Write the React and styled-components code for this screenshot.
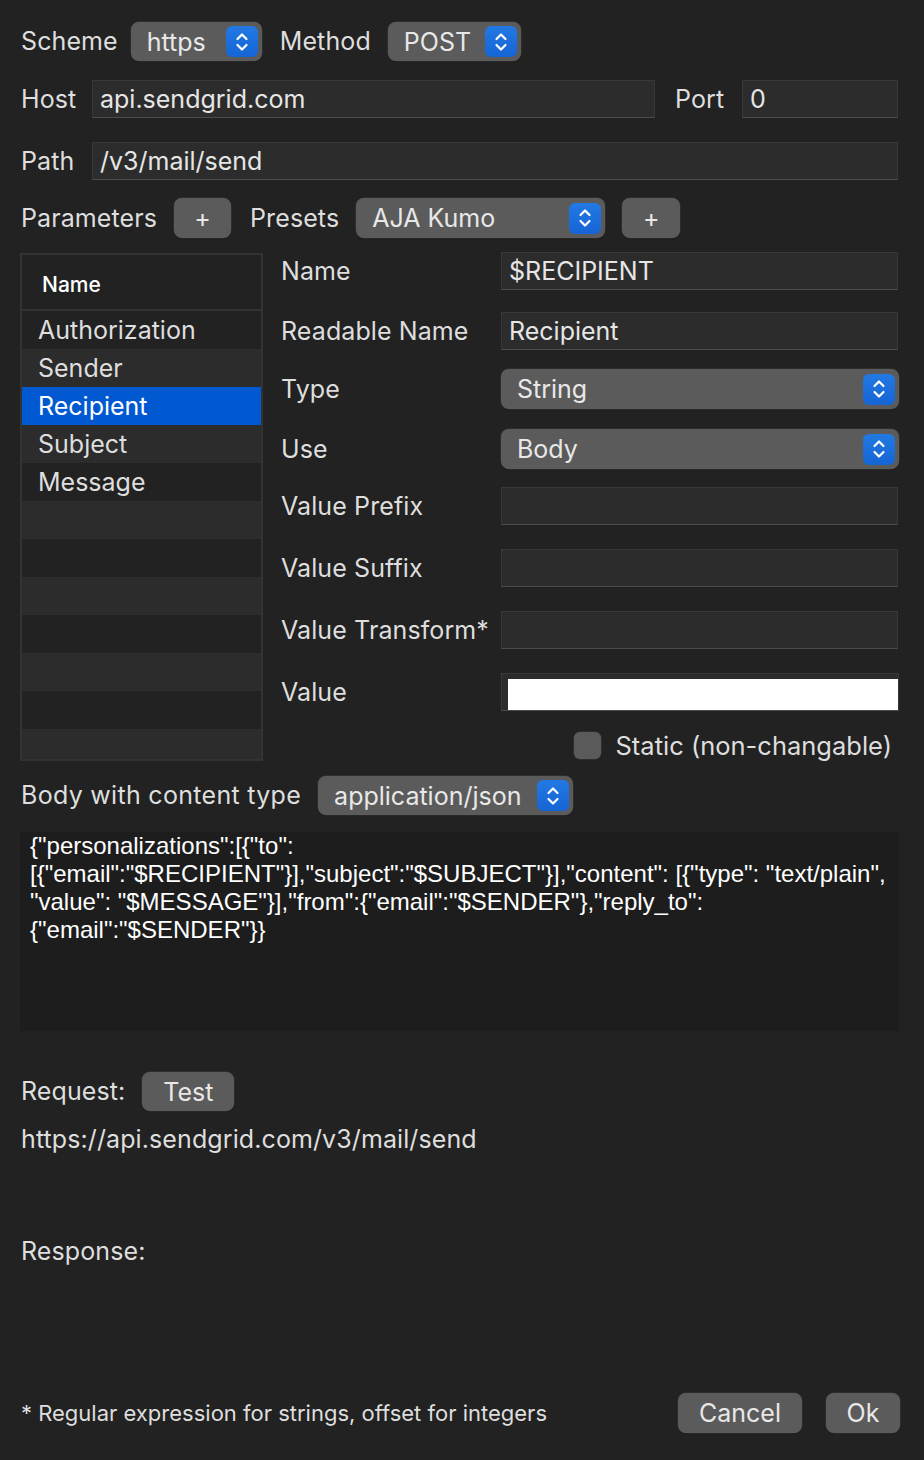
import React from "react";
import styled, { createGlobalStyle } from "styled-components";

const GlobalStyle = createGlobalStyle`
	body {
		margin: 0;
		background: #222222;
		font-family: Inter, "Noto Sans", sans-serif;
		color: #dedede;
	}
`;

const Window = styled.div`
	width: 924px;
	height: 1460px;
	box-sizing: border-box;
	padding: 22px 26px 0 20px;
	display: flex;
	flex-direction: column;
	background: #222222;
	overflow: hidden;
`;

const Row = styled.div`
	display: flex;
	align-items: center;
	flex-shrink: 0;
	height: ${(p) => p.h ?? 38}px;
	margin-top: ${(p) => p.mt ?? 0}px;
	gap: ${(p) => p.gap ?? 16}px;
`;

const Label = styled.span`
	font-size: 25px;
	line-height: 1;
	white-space: nowrap;
	padding-left: 1px;
	letter-spacing: 0.1px;
	width: ${(p) => (p.w ? `${p.w}px` : "auto")};
	flex-shrink: 0;
`;

const Field = styled.div`
	box-sizing: border-box;
	height: 38px;
	width: ${(p) => (p.w ? `${p.w}px` : "auto")};
	flex: ${(p) => (p.w ? "none" : "1")};
	background: #2c2c2c;
	border: 1px solid #383838;
	border-bottom-color: #4c4c4c;
	font-size: 25px;
	color: #e6e6e6;
	display: flex;
	align-items: center;
	padding-left: 7px;
	white-space: nowrap;
`;

const ValueField = styled(Field)`
	padding: 5px 0 0 6px;
	margin-right: -1px;
	align-items: stretch;
`;

const WhiteFill = styled.div`
	flex: 1;
	background: #ffffff;
`;

const PopupBox = styled.div`
	box-sizing: border-box;
	height: ${(p) => p.h ?? 39}px;
	width: ${(p) => (p.w ? `${p.w}px` : "auto")};
	flex: ${(p) => (p.w ? "none" : "1")};
	background: #5b5b5b;
	border-radius: 8px;
	box-shadow: 0 0 0 0.5px #3a3a3a, 0 1px 1px rgba(0, 0, 0, 0.35);
	display: flex;
	align-items: center;
	justify-content: space-between;
	padding: 0 4px 0 ${(p) => p.pl ?? 16}px;
	font-size: 25px;
	color: #e8e8e8;
	white-space: nowrap;
`;

const Stepper = styled.div`
	width: 32px;
	height: 31px;
	border-radius: 6px;
	background: linear-gradient(#2379e3, #1565d4);
	display: flex;
	align-items: center;
	justify-content: center;
	flex-shrink: 0;
`;

const Chevrons = () => (
	<svg width="14" height="24" viewBox="0 0 14 24" fill="none">
		<path d="M2.5 9 L7 4.5 L11.5 9" stroke="#fff" strokeWidth="2.2" strokeLinecap="round" strokeLinejoin="round" />
		<path d="M2.5 15 L7 19.5 L11.5 15" stroke="#fff" strokeWidth="2.2" strokeLinecap="round" strokeLinejoin="round" />
	</svg>
);

const Popup = ({ children, ...rest }) => (
	<PopupBox {...rest}>
		<span>{children}</span>
		<Stepper>
			<Chevrons />
		</Stepper>
	</PopupBox>
);

const Button = styled.div`
	box-sizing: border-box;
	height: ${(p) => p.h ?? 40}px;
	width: ${(p) => p.w}px;
	flex-shrink: 0;
	background: #5b5b5b;
	border-radius: 8px;
	box-shadow: 0 0 0 0.5px #3a3a3a, 0 1px 1px rgba(0, 0, 0, 0.35);
	display: flex;
	align-items: center;
	justify-content: center;
	font-size: 25px;
	color: #e8e8e8;
`;

const Main = styled.div`
	display: flex;
	flex-shrink: 0;
	margin-top: 15px;
	height: 508px;
`;

const Table = styled.div`
	box-sizing: border-box;
	width: 243px;
	flex-shrink: 0;
	border: 2px solid #333333;
	display: flex;
	flex-direction: column;
	background: #222222;
	overflow: hidden;
`;

const TableHeader = styled.div`
	box-sizing: border-box;
	height: 56px;
	flex-shrink: 0;
	border-bottom: 2px solid #333333;
	display: flex;
	align-items: center;
	padding-left: 20px;
	padding-top: 4px;
	font-size: 21px;
	font-weight: 500;
	color: #ffffff;
`;

const TableRow = styled.div`
	height: 38px;
	flex-shrink: 0;
	display: flex;
	align-items: center;
	padding-left: 16px;
	font-size: 25px;
	color: ${(p) => (p.selected ? "#ffffff" : "#dedede")};
	background: ${(p) => (p.selected ? "#0059d0" : p.alt ? "#2c2c2c" : "#222222")};
`;

const Form = styled.div`
	flex: 1;
	display: flex;
	flex-direction: column;
	padding-left: 17px;
	margin-top: -1px;
`;

const FormRow = styled.div`
	display: flex;
	align-items: center;
	height: ${(p) => p.h ?? 38}px;
	margin-top: ${(p) => p.mt ?? 0}px;
`;

const FormLabel = styled(Label)`
	width: 220px;
`;

const StaticRow = styled.div`
	display: flex;
	align-items: center;
	justify-content: flex-end;
	gap: 14px;
	margin-top: 20px;
	height: 28px;
	padding-right: 6px;
	font-size: 25.5px;
`;

const Checkbox = styled.div`
	width: 27px;
	height: 27px;
	border-radius: 6px;
	background: #5a5a5a;
	box-shadow: 0 0 0 0.5px #3a3a3a;
`;

const BodyText = styled.div`
	box-sizing: border-box;
	flex-shrink: 0;
	margin: 17px -1px 0 0;
	height: 199px;
	background: #1d1d1d;
	padding: 0 10px;
	font-family: "Liberation Sans", Arial, sans-serif;
	font-size: 24px;
	line-height: 28px;
	color: #ffffff;
`;

const BodyLine = styled.div`
	white-space: nowrap;
`;

const Url = styled.div`
	margin-top: 12px;
	height: 32px;
	flex-shrink: 0;
	display: flex;
	align-items: center;
	font-size: 25px;
	padding-left: 1px;
	letter-spacing: 0.1px;
`;

const Footer = styled.div`
	display: flex;
	align-items: center;
	margin: auto -2px 27px 0;
	height: 40px;
	gap: 24px;
`;

const Note = styled.span`
	flex: 1;
	font-size: 22px;
	padding-left: 1px;
`;

const params = ["Authorization", "Sender", "Recipient", "Subject", "Message", "", "", "", "", "", "", ""];

const bodyLines = [
	'{"personalizations":[{"to":',
	'[{"email":"$RECIPIENT"}],"subject":"$SUBJECT"}],"content": [{"type": "text/plain",',
	'"value": "$MESSAGE"}],"from":{"email":"$SENDER"},"reply_to":',
	'{"email":"$SENDER"}}',
];

const App = () => {
	return (
		<>
			<GlobalStyle />
			<Window>
				<Row h={39} gap={0}>
					<Label>Scheme</Label>
					<Popup w={131} style={{ marginLeft: 13 }}>https</Popup>
					<Label style={{ marginLeft: 17 }}>Method</Label>
					<Popup w={133} style={{ marginLeft: 17 }}>POST</Popup>
				</Row>
				<Row mt={19} gap={0}>
					<Label w={71}>Host</Label>
					<Field w={563}>api.sendgrid.com</Field>
					<Label style={{ marginLeft: 19 }} w={67}>Port</Label>
					<Field w={156}>0</Field>
				</Row>
				<Row mt={24} gap={0}>
					<Label w={71}>Path</Label>
					<Field>/v3/mail/send</Field>
				</Row>
				<Row mt={18} h={40} gap={0}>
					<Label>Parameters</Label>
					<Button w={57} style={{ marginLeft: 17 }}>+</Button>
					<Label style={{ marginLeft: 18 }}>Presets</Label>
					<Popup w={249} h={40} style={{ marginLeft: 17 }}>AJA Kumo</Popup>
					<Button w={58} style={{ marginLeft: 17 }}>+</Button>
				</Row>
				<Main>
					<Table>
						<TableHeader>Name</TableHeader>
						{params.map((p, i) => (
							<TableRow key={i} alt={i % 2 === 1} selected={p === "Recipient"}>
								{p}
							</TableRow>
						))}
					</Table>
					<Form>
						<FormRow>
							<FormLabel>Name</FormLabel>
							<Field>$RECIPIENT</Field>
						</FormRow>
						<FormRow mt={22}>
							<FormLabel>Readable Name</FormLabel>
							<Field>Recipient</Field>
						</FormRow>
						<FormRow mt={19} h={40}>
							<FormLabel>Type</FormLabel>
							<Popup h={40} style={{ marginRight: -1 }}>String</Popup>
						</FormRow>
						<FormRow mt={20} h={40}>
							<FormLabel>Use</FormLabel>
							<Popup h={40} style={{ marginRight: -1 }}>Body</Popup>
						</FormRow>
						<FormRow mt={18}>
							<FormLabel>Value Prefix</FormLabel>
							<Field />
						</FormRow>
						<FormRow mt={24}>
							<FormLabel>Value Suffix</FormLabel>
							<Field />
						</FormRow>
						<FormRow mt={24}>
							<FormLabel>Value Transform*</FormLabel>
							<Field />
						</FormRow>
						<FormRow mt={24}>
							<FormLabel>Value</FormLabel>
							<ValueField>
								<WhiteFill />
							</ValueField>
						</FormRow>
						<StaticRow>
							<Checkbox />
							<span>Static (non-changable)</span>
						</StaticRow>
					</Form>
				</Main>
				<Row mt={15} h={39} gap={0}>
					<Label style={{ letterSpacing: 0.3 }}>Body with content type</Label>
					<Popup w={255} style={{ marginLeft: 17 }}>application/json</Popup>
				</Row>
				<BodyText>
					{bodyLines.map((l, i) => (
						<BodyLine key={i}>{l}</BodyLine>
					))}
				</BodyText>
				<Row mt={41} h={39} gap={0}>
					<Label>Request:</Label>
					<Button w={92} h={39} style={{ marginLeft: 17 }}>Test</Button>
				</Row>
				<Url>https://api.sendgrid.com/v3/mail/send</Url>
				<Row mt={80} h={32}>
					<Label>Response:</Label>
				</Row>
				<Footer>
					<Note>* Regular expression for strings, offset for integers</Note>
					<Button w={124}>Cancel</Button>
					<Button w={74}>Ok</Button>
				</Footer>
			</Window>
		</>
	);
};

export default App;
